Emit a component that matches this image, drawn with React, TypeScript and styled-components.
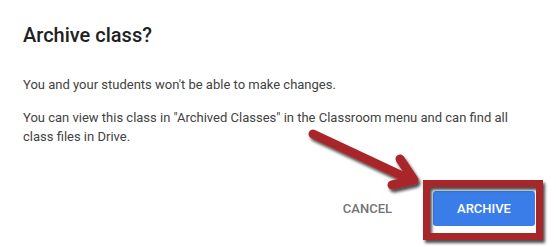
import styled, { createGlobalStyle } from "styled-components";

const GlobalStyle = createGlobalStyle`
  html, body {
    margin: 0;
    padding: 0;
    background: #ffffff;
  }
  body {
    font-family: Roboto, "Liberation Sans", Arial, sans-serif;
  }
`;

const Page = styled.div`
  position: relative;
  width: 556px;
  height: 247px;
  overflow: hidden;
  background: #ffffff;
`;

const Dialog = styled.div`
  display: flex;
  flex-direction: column;
  padding: 23px 21px 0 23px;
`;

const Title = styled.h2`
  margin: 0;
  font-size: 20px;
  line-height: 24px;
  font-weight: 500;
  color: #212121;
`;

const Body = styled.div`
  margin-top: 28px;
  width: 500px;
  display: flex;
  flex-direction: column;
  gap: 14px;
`;

const Text = styled.p`
  margin: 0;
  font-size: 13px;
  line-height: 19px;
  color: #424242;
`;

const Actions = styled.div`
  display: flex;
  justify-content: flex-end;
  align-items: center;
  gap: 25px;
  margin-top: 45px;
`;

const Button = styled.button<{ $primary?: boolean }>`
  height: 35px;
  min-width: ${(p) => (p.$primary ? "102px" : "0")};
  padding: 0 16px;
  border: none;
  border-radius: 3px;
  font-family: Roboto, "Liberation Sans", Arial, sans-serif;
  font-size: 13px;
  font-weight: 500;
  text-transform: uppercase;
  cursor: pointer;
  background: ${(p) => (p.$primary ? "#3a7de8" : "transparent")};
  color: ${(p) => (p.$primary ? "#ffffff" : "#737373")};
`;

const Annotation = styled.svg`
  position: absolute;
  left: 0;
  top: 0;
  pointer-events: none;
`;

export default function App() {
  return (
    <>
      <GlobalStyle />
      <Page>
        <Dialog>
          <Title>Archive class?</Title>
          <Body>
            <Text>You and your students won't be able to make changes.</Text>
            <Text>
              You can view this class in "Archived Classes" in the Classroom
              menu and can find all class files in Drive.
            </Text>
          </Body>
          <Actions>
            <Button>Cancel</Button>
            <Button $primary>Archive</Button>
          </Actions>
        </Dialog>
        <Annotation width="556" height="247" viewBox="0 0 556 247">
          <defs>
            <filter id="shadow" x="-20%" y="-20%" width="140%" height="140%">
              <feDropShadow dx="2" dy="3" stdDeviation="1.6" floodColor="#000" floodOpacity="0.7" />
            </filter>
          </defs>
          <g filter="url(#shadow)" stroke="#a8262a" fill="none" strokeLinecap="round" strokeLinejoin="round">
            <line x1="313" y1="134" x2="409" y2="179" strokeWidth="9" />
            <polyline points="400,159 414,180 392,185" strokeWidth="9" />
            <rect x="426.5" y="183.5" width="113" height="53" strokeWidth="7" strokeLinejoin="miter" />
          </g>
        </Annotation>
      </Page>
    </>
  );
}
